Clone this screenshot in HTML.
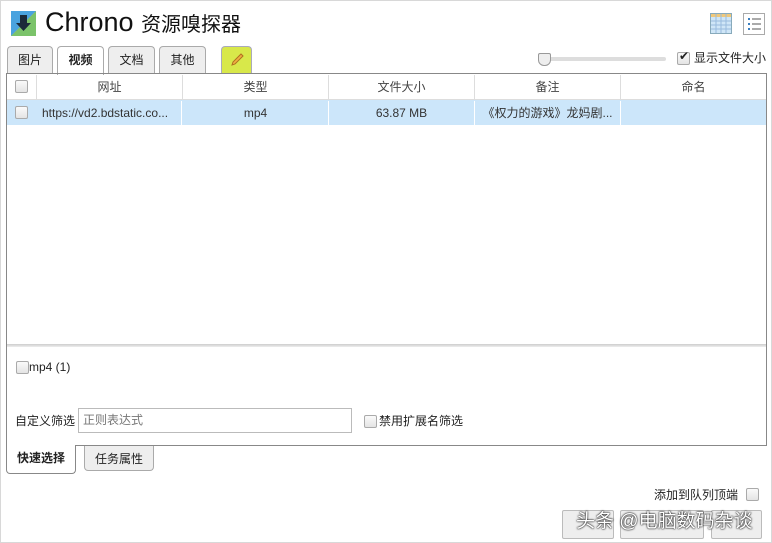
<!DOCTYPE html><html><head><meta charset="utf-8"><style>
body{margin:0;width:772px;height:543px;background:#fff;font-family:"Liberation Sans","Noto Sans CJK SC",sans-serif;font-size:12px;color:#222;position:relative;overflow:hidden}
.a{position:absolute}
.win{left:0;top:0;width:770px;height:541px;border:1px solid #d8d8d8}
.tab{position:absolute;top:46px;height:26px;border:1px solid #aaa;border-bottom:none;border-radius:4px 4px 0 0;background:#eee;text-align:center;line-height:26px;font-size:12px}
.cb{position:absolute;width:11px;height:11px;border:1px solid #aaa;border-radius:2px;background:linear-gradient(#fafafa,#e4e4e4)}
.th{position:absolute;top:0;height:25px;line-height:25px;text-align:center;border-right:1px solid #ddd;color:#444}
.td{position:absolute;top:26px;height:25px;line-height:25px;text-align:center;border-right:1px solid #fff;color:#333}
.btn{position:absolute;top:510px;height:27px;border:1px solid #bbb;border-radius:2px;background:#eee}
</style></head><body>
<div class="a win"></div>
<svg class="a" style="left:11px;top:11px" width="25" height="25"><rect width="25" height="25" fill="#f7b949"/><polygon points="25,0 25,25 0,25" fill="#7bc36a"/><polygon points="0,0 25,0 0,25" fill="#4aa3df"/><path d="M9 4h7v8h4l-7.5 8L5 12h4z" fill="#1b2a3a"/></svg>
<div class="a" style="left:45px;top:7px;font-size:27px;color:#111">Chrono <span style="font-size:20px">资源嗅探器</span></div>
<svg class="a" style="left:710px;top:13px" width="22" height="21"><rect x="0.5" y="0.5" width="21" height="20" fill="#cfe6f7" stroke="#8ab"/><rect x="1" y="1" width="20" height="3" fill="#f0c87a"/><path d="M1 8h20M1 12h20M1 16h20M6 1v19M11 1v19M16 1v19" stroke="#9bd" /></svg>
<svg class="a" style="left:743px;top:13px" width="22" height="22"><rect x="0.5" y="0.5" width="21" height="21" fill="#fff" stroke="#aaa"/><path d="M5 6h2M5 11h2M5 16h2" stroke="#3a7fc0" stroke-width="2"/><path d="M9 6h9M9 11h9M9 16h9" stroke="#555"/></svg>
<div class="tab" style="left:7px;width:44px">图片</div>
<div class="tab" style="left:57px;width:45px;background:#fff;height:28px;font-weight:bold">视频</div>
<div class="tab" style="left:108px;width:45px">文档</div>
<div class="tab" style="left:159px;width:45px">其他</div>
<div class="tab" style="left:221px;width:29px;background:#d8e84a;border-color:#aab"><svg width="16" height="16" style="margin-top:5px"><path d="M3 13l1-3 8-8 2 2-8 8z" fill="#f0b040" stroke="#b07020"/></svg></div>
<div class="a" style="left:545px;top:57px;width:121px;height:4px;background:#ddd;border-radius:2px"></div>
<div class="a" style="left:538px;top:53px;width:11px;height:11px;border:1px solid #999;border-radius:2px 2px 6px 6px;background:#eee"></div>
<div class="cb" style="left:677px;top:52px"></div><div class="a" style="left:679px;top:49px;font-size:12px">✔</div>
<div class="a" style="left:694px;top:49px;font-size:12px">显示文件大小</div>
<div class="a" style="left:6px;top:73px;width:759px;height:371px;border:1px solid #888">
 <div class="a" style="left:0;top:0;width:759px;height:25px;border-bottom:1px solid #ddd"></div>
 <div class="a" style="left:0;top:26px;width:759px;height:25px;background:#cce6fa"></div>
 <div class="th" style="left:0;width:29px;top:1px"></div><div class="cb" style="left:8px;top:6px"></div>
 <div class="th" style="left:30px;width:145px;top:1px">网址</div>
 <div class="th" style="left:176px;width:145px;top:1px">类型</div>
 <div class="th" style="left:322px;width:145px;top:1px">文件大小</div>
 <div class="th" style="left:468px;width:145px;top:1px">备注</div>
 <div class="th" style="left:614px;width:145px;border:none;top:1px">命名</div>
 <div class="cb" style="left:8px;top:32px"></div>
 <div class="td" style="left:30px;width:145px;text-align:left;padding-left:5px;box-sizing:border-box;top:27px">https://vd2.bdstatic.co...</div>
 <div class="td" style="left:176px;width:145px;top:27px">mp4</div>
 <div class="td" style="left:322px;width:145px;top:27px">63.87 MB</div>
 <div class="td" style="left:468px;width:145px;top:27px">《权力的游戏》龙妈剧...</div>
 <div class="a" style="left:0;top:270px;width:759px;height:3px;background:linear-gradient(#ccc,#eee)"></div>
 <div class="cb" style="left:9px;top:287px"></div><div class="a" style="left:22px;top:286px">mp4 (1)</div>
 <div class="a" style="left:8px;top:338px">自定义筛选</div>
 <div class="a" style="left:71px;top:334px;width:268px;height:23px;border:1px solid #bbb;line-height:23px;padding-left:4px;color:#777">正则表达式</div>
 <div class="cb" style="left:357px;top:341px"></div><div class="a" style="left:372px;top:338px">禁用扩展名筛选</div>
</div>
<div class="a" style="left:6px;top:445px;width:68px;height:28px;border:1px solid #888;border-top:none;border-radius:0 0 4px 4px;background:#fff;text-align:center;line-height:26px;font-weight:bold">快速选择</div>
<div class="a" style="left:84px;top:446px;width:68px;height:24px;border:1px solid #aaa;border-top:none;border-radius:0 0 4px 4px;background:#eee;text-align:center;line-height:26px">任务属性</div>
<div class="a" style="left:654px;top:486px">添加到队列顶端</div><div class="cb" style="left:746px;top:488px"></div>
<div class="btn" style="left:562px;width:50px"></div>
<div class="btn" style="left:620px;width:82px"></div>
<div class="btn" style="left:711px;width:49px"></div>
<div class="a" style="left:576px;top:506px;font-size:19px;color:#fff;text-shadow:0 0 2px #000,0 0 1px #000">头条 @电脑数码杂谈</div>
</body></html>
